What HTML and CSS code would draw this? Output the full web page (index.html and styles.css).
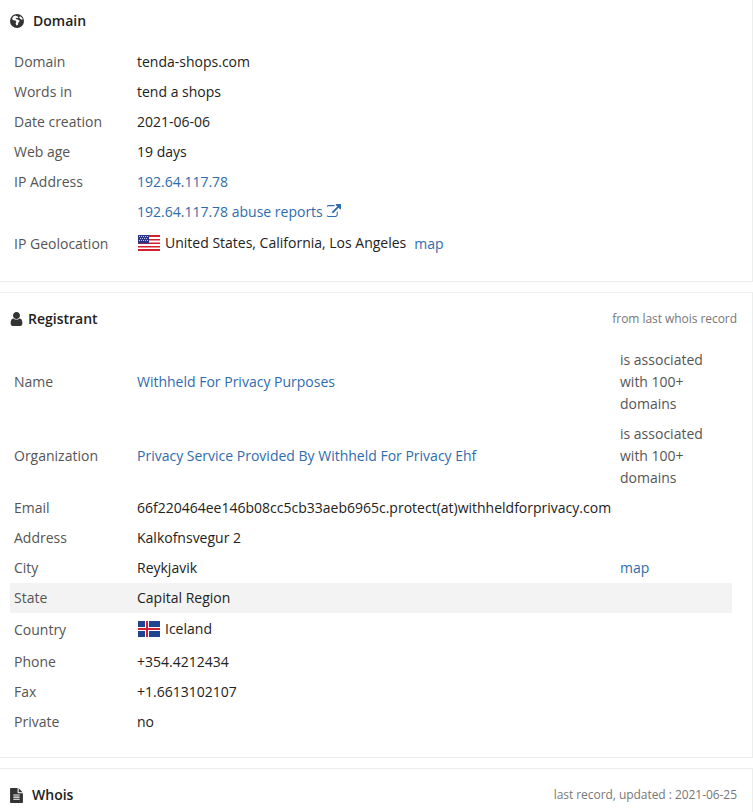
FILE: index.html
```html
<!DOCTYPE html>
<html lang="en">
<head>
<meta charset="utf-8">
<title>Domain</title>
<link rel="stylesheet" href="styles.css">
</head>
<body>
<section class="panel panel-first">
  <header class="head">
    <h2 class="title title-wide">
      <svg class="ico ico-globe" viewBox="0 0 16 16"><path fill-rule="evenodd" d="M8 1a7 7 0 1 0 0 14A7 7 0 0 0 8 1zM6.200 2.600 4 3.700 3 6l1.500 1.200 2 .3.8 1.400-.7 1.500 1 2 1.200-.5.6-2.400 1.400-1.500-1.600-1.300-2-.6-.7-.9 1.100-.5 1.100.6.7-.8-.7-1.100zM11 3.200l-.8 1.300 1.200 1.600 1.900.9.3-1.500A6 6 0 0 0 11 3.200z"/></svg>
      Domain
    </h2>
  </header>
  <table class="info">
    <tr><th>Domain</th><td>tenda-shops.com</td></tr>
    <tr><th>Words in</th><td>tend a shops</td></tr>
    <tr><th>Date creation</th><td>2021-06-06</td></tr>
    <tr><th>Web age</th><td>19 days</td></tr>
    <tr><th>IP Address</th><td><a href="#">192.64.117.78</a></td></tr>
    <tr><th></th><td><a href="#">192.64.117.78 abuse reports <svg class="ico-ext" viewBox="128 0 1664 1536"><path d="M1408 928v320q0 119-84.500 203.500t-203.500 84.500h-832q-119 0-203.500-84.500t-84.500-203.500v-832q0-119 84.500-203.500t203.500-84.500h704q14 0 23 9t9 23v64q0 14-9 23t-23 9h-704q-66 0-113 47t-47 113v832q0 66 47 113t113 47h832q66 0 113-47t47-113v-320q0-14 9-23t23-9h64q14 0 23 9t9 23zm384-864v512q0 26-19 45t-45 19-45-19l-176-176-652 652q-10 10-23 10t-23-10l-114-114q-10-10-10-23t10-23l652-652-176-176q-19-19-19-45t19-45 45-19h512q26 0 45 19t19 45z"/></svg></a></td></tr>
    <tr><th>IP Geolocation</th><td>
      <div class="flag-line">
        <span class="flagged"><svg class="flag" viewBox="0 0 22 16"><rect width="22" height="16" fill="#fff"/><path d="M0 0h22v2H0zM0 4h22v1.500H0zM0 7.500h22V9H0zM0 11h22v1.500H0zM0 14h22v2H0z" fill="#d3222e"/><rect width="11" height="8.500" fill="#2b3487"/><path d="M1 1h1v1H1zM3 1h1v1H3zM5 1h1v1H5zM7 1h1v1H7zM9 1h1v1H9zM2 3h1v1H2zM4 3h1v1H4zM6 3h1v1H6zM8 3h1v1H8zM1 5h1v1H1zM3 5h1v1H3zM5 5h1v1H5zM7 5h1v1H7zM9 5h1v1H9z" fill="#c9cce6"/></svg>United States, California, Los Angeles</span>
        <a href="#">map</a>
      </div>
    </td></tr>
  </table>
</section>

<section class="panel">
  <header class="head">
    <h2 class="title">
      <svg class="ico ico-user" viewBox="256 128 1280 1536"><path d="M1536 1399q0 109-62.500 187t-150.500 78h-854q-88 0-150.500-78t-62.500-187q0-85 8.500-160.500t31.500-152 58.500-131 94-89 134.500-34.500q131 128 313 128t313-128q76 0 134.500 34.500t94 89 58.500 131 31.500 152 8.500 160.500zm-256-887q0 159-112.500 271.500t-271.500 112.500-271.500-112.500-112.500-271.500 112.500-271.500 271.500-112.500 271.500 112.500 112.500 271.500z"/></svg>
      Registrant
    </h2>
    <span class="note">from last whois record</span>
  </header>
  <table class="info info-three">
    <tr><th>Name</th><td><a href="#">Withheld For Privacy Purposes</a></td><td class="side">is associated with 100+ domains</td></tr>
    <tr><th>Organization</th><td><a href="#">Privacy Service Provided By Withheld For Privacy Ehf</a></td><td class="side">is associated with 100+ domains</td></tr>
    <tr><th>Email</th><td>66f220464ee146b08cc5cb33aeb6965c.protect(at)withheldforprivacy.com</td><td class="side"></td></tr>
    <tr><th>Address</th><td>Kalkofnsvegur 2</td><td class="side"></td></tr>
    <tr><th>City</th><td>Reykjavik</td><td class="side"><a href="#">map</a></td></tr>
    <tr class="row-hover"><th>State</th><td>Capital Region</td><td class="side"></td></tr>
    <tr><th>Country</th><td><div class="flag-line"><span class="flagged"><svg class="flag" viewBox="0 0 22 16"><rect width="22" height="16" fill="#1f4490"/><path d="M7 0h4v16H7zM0 6h22v4H0z" fill="#fff"/><path d="M8 0h2v16H8zM0 7h22v2H0z" fill="#d21f34"/></svg>Iceland</span></div></td><td class="side"></td></tr>
    <tr><th>Phone</th><td>+354.4212434</td><td class="side"></td></tr>
    <tr><th>Fax</th><td>+1.6613102107</td><td class="side"></td></tr>
    <tr><th>Private</th><td>no</td><td class="side"></td></tr>
  </table>
</section>

<section class="panel panel-last">
  <header class="head">
    <h2 class="title title-wide">
      <svg class="ico ico-file" viewBox="128 0 1536 1792"><path d="M1596 476q14 14 28 36h-472v-472q22 14 36 28zm-476 164h544v1056q0 40-28 68t-68 28h-1344q-40 0-68-28t-28-68v-1600q0-40 28-68t68-28h800v544q0 40 28 68t68 28zm160 736v-64q0-14-9-23t-23-9h-704q-14 0-23 9t-9 23v64q0 14 9 23t23 9h704q14 0 23-9t9-23zm0-256v-64q0-14-9-23t-23-9h-704q-14 0-23 9t-9 23v64q0 14 9 23t23 9h704q14 0 23-9t9-23zm0-256v-64q0-14-9-23t-23-9h-704q-14 0-23 9t-9 23v64q0 14 9 23t23 9h704q14 0 23-9t9-23z"/></svg>
      Whois
    </h2>
    <span class="note">last record, updated : 2021-06-25</span>
  </header>
</section>
</body>
</html>
```

FILE: styles.css
```css
html, body {
  margin: 0;
  padding: 0;
  height: 812px;
  overflow: hidden;
  background: #fff;
}
body {
  font-family: "Open Sans", "Liberation Sans", sans-serif;
  font-size: 14px;
  line-height: 22px;
  color: #333;
}
a {
  color: #2f6cae;
  text-decoration: none;
}
.panel {
  padding: 15px 15px 20px 10px;
  border: 1px solid #eceded;
  border-left: 0;
  margin-bottom: 10px;
}
.panel-first {
  border-top: 0;
  padding-top: 10px;
}
.panel-last {
  margin-bottom: 0;
  padding-bottom: 0;
}
.head {
  display: flex;
  justify-content: space-between;
  align-items: center;
  height: 22px;
  margin-bottom: 15px;
}
.title {
  display: flex;
  align-items: center;
  gap: 5px;
  margin: 0;
  font-size: 14px;
  font-weight: 600;
  color: #222;
}
.title-wide {
  gap: 8px;
}
.panel-last .title-wide {
  gap: 9px;
}
.ico {
  display: block;
  fill: #333;
}
.ico-globe {
  width: 16px;
  height: 16px;
  margin-left: -1px;
}
.ico-user {
  width: 13px;
  height: 14px;
}
.ico-file {
  width: 13px;
  height: 15px;
}
.ico-ext {
  width: 14px;
  height: 13px;
  margin-left: 1px;
  fill: #2f6cae;
}
.note {
  font-size: 12px;
  letter-spacing: -0.05px;
  color: #777;
}
.info {
  width: 722px;
  border-collapse: collapse;
  table-layout: fixed;
}
.info th,
.info td {
  padding: 4px;
  text-align: left;
  vertical-align: middle;
  font-weight: 400;
}
.info th {
  width: 115px;
  color: #555;
}
.info td {
  color: #222;
}
.info td a {
  color: #2f6cae;
}
.info-three .side {
  width: 108px;
  color: #555;
}
.row-hover {
  background: #f3f3f3;
}
.flag-line {
  display: flex;
  align-items: center;
  gap: 8px;
  height: 26px;
}
.flagged {
  display: flex;
  align-items: center;
  gap: 5px;
  margin-bottom: 2px;
}
.flag {
  display: block;
  width: 22px;
  height: 16px;
  margin-left: 1px;
}
```
